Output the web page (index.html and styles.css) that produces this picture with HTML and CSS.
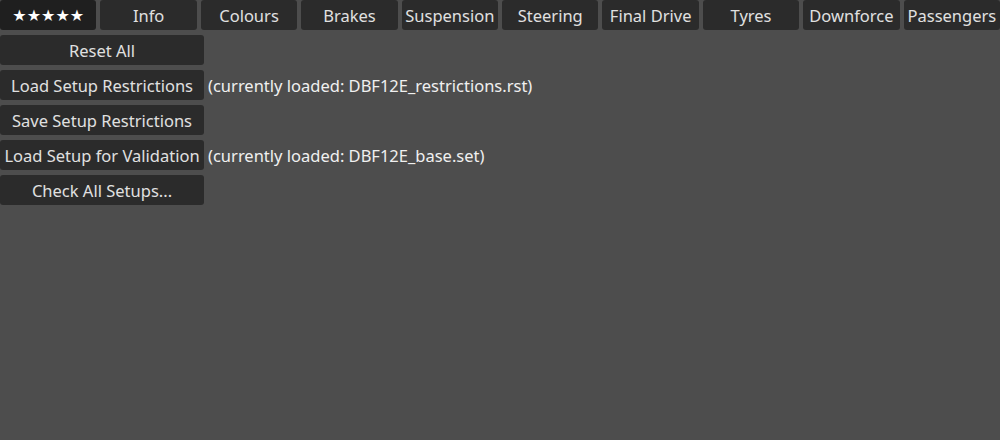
FILE: index.html
```html
<!DOCTYPE html>
<html>
<head>
<meta charset="utf-8">
<link rel="stylesheet" href="styles.css">
</head>
<body>
<div class="tabs">
  <div class="tab tab-active">★★★★★</div>
  <div class="tab">Info</div>
  <div class="tab">Colours</div>
  <div class="tab">Brakes</div>
  <div class="tab">Suspension</div>
  <div class="tab">Steering</div>
  <div class="tab">Final Drive</div>
  <div class="tab">Tyres</div>
  <div class="tab">Downforce</div>
  <div class="tab">Passengers</div>
</div>
<div class="rows">
  <div class="row"><div class="btn">Reset All</div></div>
  <div class="row"><div class="btn">Load Setup Restrictions</div><span class="label">(currently loaded: DBF12E_restrictions.rst)</span></div>
  <div class="row"><div class="btn">Save Setup Restrictions</div></div>
  <div class="row"><div class="btn">Load Setup for Validation</div><span class="label">(currently loaded: DBF12E_base.set)</span></div>
  <div class="row"><div class="btn">Check All Setups...</div></div>
</div>
</body>
</html>
```
FILE: styles.css
```css
html, body {
  margin: 0;
  padding: 0;
  background: #4d4d4d;
  width: 1000px;
  height: 440px;
  overflow: hidden;
  font-family: "Noto Sans", "DejaVu Sans", sans-serif;
  font-size: 16.5px;
  color: #e0e0e0;
}
.tabs {
  display: flex;
  gap: 4px;
  height: 30px;
}
.tab {
  flex: 1 1 0;
  min-width: 0;
  box-sizing: border-box;
  padding-top: 1px;
  background: #2b2b2b;
  border-radius: 3px;
  display: flex;
  align-items: center;
  justify-content: center;
  white-space: nowrap;
}
.tab-active {
  background: #1f1f1f;
  color: #ffffff;
  font-size: 16px;
  padding-top: 0;
}
.rows {
  display: flex;
  flex-direction: column;
  gap: 5px;
  margin-top: 5px;
}
.row {
  display: flex;
  align-items: center;
  gap: 4px;
  height: 30px;
  box-sizing: border-box;
  padding-top: 1px;
}
.btn {
  width: 204px;
  height: 30px;
  box-sizing: border-box;
  margin-top: -1px;
  padding-top: 1px;
  background: #2b2b2b;
  border-radius: 3px;
  display: flex;
  align-items: center;
  justify-content: center;
  white-space: nowrap;
}
.label {
  white-space: nowrap;
  color: #f0f0f0;
}
```
